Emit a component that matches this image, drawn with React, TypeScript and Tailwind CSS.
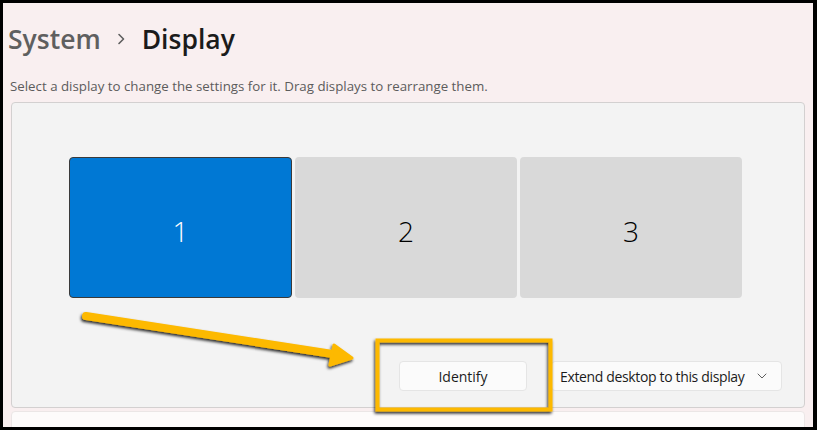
import React from 'react'

const font = { fontFamily: '"Open Sans", "Noto Sans", "Liberation Sans", sans-serif' }

interface MonitorProps {
  label: string
  active?: boolean
}

function Monitor({ label, active }: MonitorProps) {
  return (
    <div
      className={
        active
          ? 'w-[223px] h-[141px] rounded-[4px] bg-[#0078d4] border border-[#3a3a3a] flex items-center justify-center pt-[6px] text-white text-[28px] font-light'
          : 'w-[222px] h-[141px] rounded-[4px] bg-[#d9d9d9] flex items-center justify-center pt-[6px] text-black text-[28px] font-light'
      }
    >
      {label}
    </div>
  )
}

function Annotation() {
  return (
    <svg className="absolute inset-0 pointer-events-none" width="810" height="424" viewBox="0 0 810 424">
      <defs>
        <filter id="shadow" x="-10%" y="-20%" width="130%" height="160%">
          <feDropShadow dx="-1" dy="2" stdDeviation="1.4" floodColor="#000" floodOpacity="0.85" />
        </filter>
      </defs>
      <g filter="url(#shadow)">
        <line x1="83" y1="313" x2="336" y2="352" stroke="#fdb900" strokeWidth="8" strokeLinecap="round" />
        <polygon points="349,355 331,342 327,362" fill="#fdb900" stroke="#fdb900" strokeWidth="3" strokeLinejoin="round" />
        <rect x="374.5" y="337.5" width="173" height="69" fill="none" stroke="#fdb900" strokeWidth="4" />
      </g>
    </svg>
  )
}

export default function App() {
  return (
    <div className="w-[817px] h-[430px] bg-black pt-[3px] pl-[3px] pr-[4px] pb-[3px]" style={font}>
      <div className="relative w-full h-full bg-[#f9eff0] overflow-hidden">
        <div className="flex items-center pl-[5px] pt-[18px] h-[54px]">
          <span className="text-[26.5px] leading-[36px] font-semibold text-[#5f5f5f]">System</span>
          <svg className="ml-[16px] mr-[17px]" width="8" height="12" viewBox="0 0 8 12">
            <path d="M2 1.5 L6.5 6 L2 10.5" fill="none" stroke="#5f5f5f" strokeWidth="1.6" strokeLinecap="round" strokeLinejoin="round" />
          </svg>
          <span className="text-[26.5px] leading-[36px] font-semibold text-[#1b1b1b]">Display</span>
        </div>
        <div className="pl-[7px] mt-[21px] text-[13.3px] leading-[16px] text-[#5c5c5c]">
          Select a display to change the settings for it. Drag displays to rearrange them.
        </div>
        <div className="mx-[8px] mt-[8px] h-[306px] rounded-[4px] border border-[#d3d0d0] bg-[#f3f3f3] flex flex-col">
          <div className="flex gap-[3px] pl-[57px] mt-[54px]">
            <Monitor label="1" active />
            <Monitor label="2" />
            <Monitor label="3" />
          </div>
          <div className="flex justify-end gap-[24px] pr-[22px] mt-[63px]">
            <button className="w-[128px] h-[30px] rounded-[4px] bg-[#fbfbfb] border border-[#e5e5e5] text-[14px] text-[#1b1b1b]">
              Identify
            </button>
            <button className="w-[231px] h-[30px] rounded-[4px] bg-[#fbfbfb] border border-[#e5e5e5] text-[14px] tracking-[-0.35px] text-[#1b1b1b] flex items-center pl-[8px] pr-[14px]">
              <span className="flex-1 text-left">Extend desktop to this display</span>
              <svg width="10" height="6" viewBox="0 0 10 6">
                <path d="M1 1 L5 5 L9 1" fill="none" stroke="#5f5f5f" strokeWidth="1" strokeLinecap="round" strokeLinejoin="round" />
              </svg>
            </button>
          </div>
        </div>
        <div className="mx-[8px] mt-[3px] h-[40px] rounded-[4px] border border-[#ebe6e6] bg-[#fdfbfb]" />
        <Annotation />
      </div>
    </div>
  )
}
